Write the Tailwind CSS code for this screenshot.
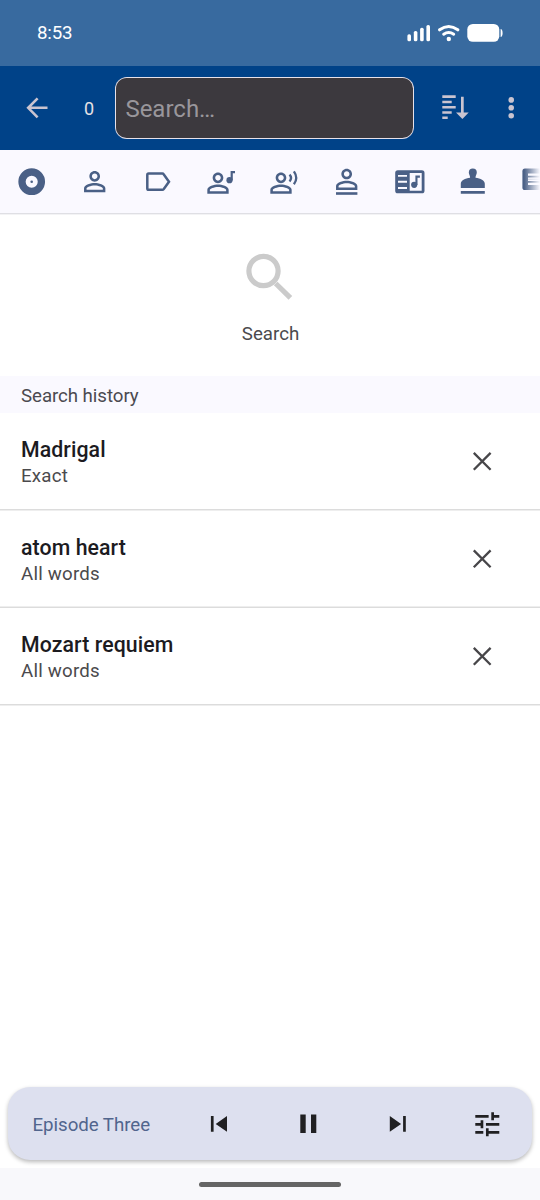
<!DOCTYPE html>
<html lang="en">
<head>
<meta charset="utf-8">
<title>Search</title>
<script src="https://cdn.jsdelivr.net/npm/@tailwindcss/browser@4"></script>
</head>
<body class="bg-white font-['Roboto',sans-serif]">
<svg class="hidden">
  <defs>
    <path id="person" d="M12 5.9c1.16 0 2.1.94 2.1 2.1s-.94 2.1-2.1 2.1S9.9 9.16 9.9 8s.94-2.1 2.1-2.1m0 9c2.97 0 6.1 1.46 6.1 2.1v1.1H5.9V17c0-.64 3.13-2.1 6.1-2.1M12 4C9.79 4 8 5.79 8 8s1.79 4 4 4 4-1.79 4-4-1.79-4-4-4m0 9c-2.67 0-8 1.34-8 4v3h16v-3c0-2.66-5.33-4-8-4"/>
  </defs>
</svg>
<div class="flex h-[1200px] w-[540px] flex-col overflow-hidden bg-white">
  <div class="flex h-[66px] shrink-0 items-center justify-between bg-[#386a9f] pr-[37px] pl-[37px] text-white">
    <span class="text-[18.7px] leading-none tracking-[-0.15px]">8:53</span>
    <svg class="h-[20px] w-[97px]" viewBox="406 23 97 20" fill="#fff">
      <rect x="407.4" y="34.3" width="3.6" height="7" rx="1.6"/>
      <rect x="413.8" y="31" width="3.6" height="10.3" rx="1.6"/>
      <rect x="420.1" y="27.7" width="3.6" height="13.6" rx="1.6"/>
      <rect x="426.4" y="25" width="3.6" height="16.3" rx="1.6"/>
      <g fill="none" stroke="#fff" stroke-width="3" stroke-linecap="round">
        <path d="M439.6 29.8Q448.7 23.3 457.8 29.8"/>
        <path d="M443.7 34.2Q448.7 30.8 453.7 34.2"/>
      </g>
      <circle cx="448.8" cy="39" r="2.2"/>
      <rect x="467.3" y="24" width="32" height="17.8" rx="5.5"/>
      <path d="M500.6 29c1.4.2 2 1.6 2 4s-.6 3.8-2 4z"/>
    </svg>
  </div>
  <div class="flex h-[84px] shrink-0 items-center bg-[#004288]">
    <svg class="h-[84px] w-[64px]" viewBox="0 66 64 84"><path d="M47.5 107.8H28.2M37.6 98.3L28.2 107.8L37.6 117.3" fill="none" stroke="#cac4d0" stroke-width="2.6"/></svg>
    <span class="w-[51px] pt-[2px] pl-[20px] text-[18px] leading-none text-[#e6e1e5]">0</span>
    <div class="h-[62.5px] w-[299px] rounded-[12px] bg-[#e6e1e9] p-[1.4px]"><div class="flex h-full items-center rounded-[10.6px] bg-[#3c393e] pt-[2px] pl-[9px] text-[24px] leading-none text-[#99969b]">Search…</div></div>
    <svg class="h-[84px] w-[126px]" viewBox="414 66 126 84" fill="#cac4d0">
      <path d="M442.3 95.2h13.4v2.7h-13.4zM442.3 100.7h9.4v2.5h-9.4zM442.3 106h13.4v2.5h-13.4zM442.3 111.2h9.4v2.6h-9.4zM442.3 116.5h5.4v2.6h-5.4zM461 96.7h2.7v15.8h5L462.4 119l-6.4-6.5h5z"/>
      <circle cx="511.2" cy="99.9" r="2.8"/><circle cx="511.2" cy="107.8" r="2.8"/><circle cx="511.2" cy="115.7" r="2.8"/>
    </svg>
  </div>
  <div class="relative flex h-[64px] shrink-0 overflow-hidden border-b border-[#dfdfe4] bg-[#faf9ff] text-[#4a6086]">
    <svg class="h-[63px] w-[63px] shrink-0" viewBox="0 150 63 63" fill="currentColor"><circle cx="31.7" cy="181.7" r="9.7" fill="none" stroke="currentColor" stroke-width="7.3"/><circle cx="31.7" cy="181.7" r="1.3"/></svg>
    <svg class="h-[63px] w-[63px] shrink-0" viewBox="63 150 63 63" fill="currentColor"><use href="#person" transform="translate(78.7 165.7) scale(1.333)"/></svg>
    <svg class="h-[63px] w-[63px] shrink-0" viewBox="126 150 63 63"><path d="M148.6 173.6H162.4Q163.2 173.6 163.8 174.4L169 181.7L163.8 189Q163.2 189.8 162.4 189.8H148.6Q147.3 189.8 147.3 188.5V174.9Q147.3 173.6 148.6 173.6Z" fill="none" stroke="currentColor" stroke-width="2.5"/></svg>
    <svg class="h-[63px] w-[63px] shrink-0" viewBox="189 150 63 63" fill="currentColor"><use href="#person" transform="translate(202 167.2) scale(1.333)"/><circle cx="229.5" cy="180.2" r="3.1"/><path d="M230.6 171h4.4v2.3h-2.2v7h-2.2z"/></svg>
    <svg class="h-[63px] w-[63px] shrink-0" viewBox="252 150 63 63" fill="currentColor"><use href="#person" transform="translate(265 167.2) scale(1.333)"/><path d="M289.5 174.6Q292.6 177.8 289.5 181.4M293.9 171.4Q298.6 178 293.9 184.3" fill="none" stroke="currentColor" stroke-width="2.3"/></svg>
    <svg class="h-[63px] w-[63px] shrink-0" viewBox="315 150 63 63" fill="currentColor"><use href="#person" transform="translate(330.7 163.3) scale(1.333)"/><path d="M336 192.2h21.4v2.6h-21.4z"/></svg>
    <svg class="h-[63px] w-[63px] shrink-0" viewBox="378 150 63 63" fill="currentColor"><rect x="395.2" y="170.3" width="29.3" height="23" rx="2.6"/><path fill="#faf9ff" d="M398 174.9h9v1.9h-9zM398 180.8h9v1.9h-9zM398 187h9v1.9h-9zM409.7 173.1h12v17.7h-12z"/><circle cx="414.2" cy="184.8" r="3.1"/><path d="M415.4 175.6h4.5v2.2h-2.4v7.2h-2.1z"/></svg>
    <svg class="h-[63px] w-[63px] shrink-0" viewBox="441 150 63 63" fill="currentColor"><path d="M472.8 168.6a4 4 0 0 1 4 4c0 2-1.3 2.8-1.3 5.2 5 .7 9.3 2.6 9.3 6v4.2h-24v-4.2c0-3.4 4.3-5.3 9.3-6 0-2.4-1.3-3.2-1.3-5.2a4 4 0 0 1 4-4zM460.8 191h24v2.7h-24z"/></svg>
    <svg class="h-[63px] w-[36px] shrink-0" viewBox="504 150 36 63" fill="currentColor"><rect x="522.4" y="168.6" width="26" height="21.4" rx="2.6"/><path fill="#faf9ff" d="M528 173.5h14v2.3h-14zM528 177.4h14v3.6h-14zM528 182.7h14v2.3h-14z"/><path d="M528 178.8h14v.8h-14z" opacity=".5"/></svg>
    <div class="absolute top-0 right-0 h-[63px] w-[16px] bg-linear-to-r from-[#faf9ff]/0 to-[#faf9ff]"></div>
  </div>
  <div class="flex h-[162px] shrink-0 flex-col items-center border-t border-[#f3f3f5]">
    <svg class="mt-[35px] h-[54px] w-[54px]" viewBox="243 250 54 54" fill="none" stroke="#cbcbcb"><circle cx="263.5" cy="271" r="14.6" stroke-width="5.2"/><path d="M275.7 283.5L290.4 297.8" stroke-width="5.2"/></svg>
    <span class="mt-[19px] ml-[1px] text-[18.7px] leading-[22px] text-[#4b4a4d]">Search</span>
  </div>
  <div class="flex h-[37px] shrink-0 items-center bg-[#faf9ff] pt-[4px] pl-[21px] text-[18.7px] leading-none tracking-[-0.06px] text-[#4b4a50]">Search history</div>
  <div class="flex flex-col">
    <div class="flex h-[98px] items-center border-b border-[#eeeeee] pl-[21px] shadow-[inset_0_-1px_0_#dcdcdc]">
      <div class="flex-1 self-start pt-[22px]"><div class="text-[21.3px] leading-[29px] font-medium tracking-[0.08px] text-[#1c1b1f]">Madrigal</div><div class="text-[18.7px] leading-[25px] tracking-[0.22px] text-[#4b4a4d]">Exact</div></div>
      <svg class="mr-[42px] h-8 w-8" viewBox="0 0 32 32"><path d="M7.8 6.9L24.6 23.7M24.6 6.9L7.8 23.7" stroke="#474649" stroke-width="2.3"/></svg>
    </div>
    <div class="flex h-[97px] items-center border-b border-[#dcdcdc] pl-[21px] shadow-[inset_0_-1px_0_#eeeeee]">
      <div class="flex-1 self-start pt-[22px]"><div class="text-[21.3px] leading-[29px] font-medium tracking-[0.08px] text-[#1c1b1f]">atom heart</div><div class="text-[18.7px] leading-[25px] tracking-[0.22px] text-[#4b4a4d]">All words</div></div>
      <svg class="mr-[42px] h-8 w-8" viewBox="0 0 32 32"><path d="M7.8 7.4L24.6 24.2M24.6 7.4L7.8 24.2" stroke="#474649" stroke-width="2.3"/></svg>
    </div>
    <div class="flex h-[98px] items-center border-b border-[#eeeeee] pl-[21px] shadow-[inset_0_-1px_0_#dcdcdc]">
      <div class="flex-1 self-start pt-[22px]"><div class="text-[21.3px] leading-[29px] font-medium tracking-[0.08px] text-[#1c1b1f]">Mozart requiem</div><div class="text-[18.7px] leading-[25px] tracking-[0.22px] text-[#4b4a4d]">All words</div></div>
      <svg class="mr-[42px] h-8 w-8" viewBox="0 0 32 32"><path d="M7.8 6.9L24.6 23.7M24.6 6.9L7.8 23.7" stroke="#474649" stroke-width="2.3"/></svg>
    </div>
  </div>
  <div class="mt-auto px-2 pb-[8px]">
    <div class="flex h-[73px] items-center rounded-[22px] bg-[#dde0ef] shadow-[0_2px_4px_rgba(0,0,0,0.28)]">
      <span class="w-[166px] pt-[4px] pl-[24.5px] text-[18.7px] leading-none tracking-[-0.04px] text-[#51658d]">Episode Three</span>
      <svg class="h-[73px] w-[358px]" viewBox="174 1087 358 73" fill="#202022">
        <path d="M210.9 1116h2.7v15.8h-2.7zM227 1116v15.8l-11.3-7.9z"/>
        <path d="M300.3 1114.5h5.4v18.5h-5.4zM311 1114.5h5.3v18.5h-5.3z"/>
        <path d="M389.8 1116v15.8l11.3-7.9zM403.1 1116h2.7v15.8h-2.7z"/>
        <path transform="translate(471.3 1108.3) scale(1.333)" d="M3 17v2h6v-2H3zM3 5v2h10V5H3zm10 16v-2h8v-2h-8v-2h-2v6h2zM7 9v2H3v2h4v2h2V9H7zm14 4v-2H11v2h10zm-6-4h2V7h4V5h-4V3h-2v6z"/>
      </svg>
    </div>
  </div>
  <div class="flex h-[32px] shrink-0 justify-center bg-[#f8f8fb] pt-[14px]"><div class="h-[5px] w-[142px] rounded-full bg-[#656565]"></div></div>
</div>
</body>
</html>
